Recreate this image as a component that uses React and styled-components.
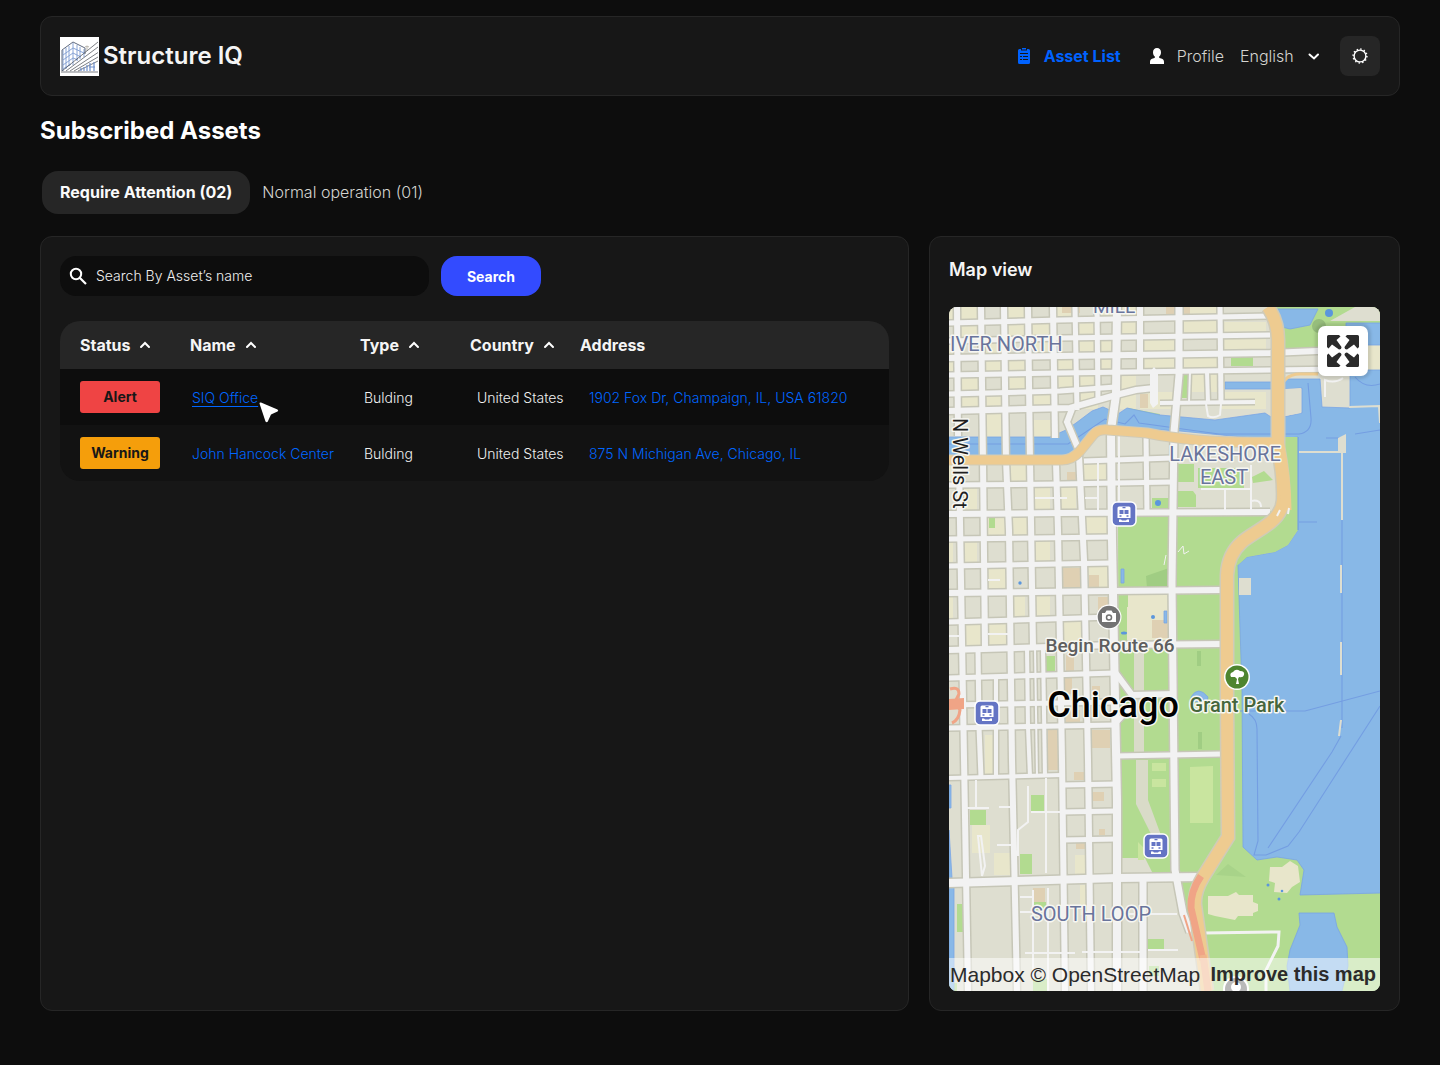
import React from "react";
import styled, { createGlobalStyle } from "styled-components";

const GlobalStyle = createGlobalStyle`
  * { box-sizing: border-box; }
  body {
    margin: 0;
    background: #0d0d0d;
    color: #fafafa;
    font-family: Inter, "Liberation Sans", sans-serif;
    font-size: 16px;
  }
  button, input, select { font-family: inherit; }
  a { text-decoration: none; }
`;

const Page = styled.div`
  min-height: 100vh;
  padding: 16px 40px 54px;
  display: flex;
  flex-direction: column;
`;

const Panel = styled.section`
  background: #171717;
  border: 1px solid #262626;
  border-radius: 12px;
  padding: 19px;
  min-width: 0;
`;

const Header = styled(Panel).attrs({ as: "header" })`
  display: flex;
  align-items: center;
  justify-content: space-between;
`;

const Brand = styled.a`
  display: flex;
  align-items: center;
  gap: 4px;
  color: #f5f5f5;
  font-size: 24px;
  font-weight: 600;
  line-height: 40px;
  white-space: nowrap;
`;

const Nav = styled.nav`
  display: flex;
  align-items: center;
  gap: 16px;
`;

const NavLink = styled.a`
  display: flex;
  align-items: center;
  gap: 8px;
  margin-right: ${(p) => (p.$active ? 8 : 0)}px;
  color: ${(p) => (p.$active ? "#0062ff" : "#d4d4d0")};
  font-weight: ${(p) => (p.$active ? 700 : 300)};
  line-height: 24px;
`;

const Language = styled.label`
  display: flex;
  align-items: center;
  gap: 12px;
  margin-right: 4px;
`;

const LanguageSelect = styled.select`
  appearance: none;
  border: 0;
  padding: 0;
  background: transparent;
  color: #d4d4d0;
  font-size: 16px;
  font-weight: 300;
  line-height: 24px;
`;

const IconButton = styled.button`
  display: grid;
  place-items: center;
  width: 40px;
  height: 40px;
  padding: 0;
  border: 0;
  border-radius: 8px;
  background: #262626;
`;

const Heading = styled.h1`
  margin: 20px 0 25px;
  font-size: 24px;
  font-weight: 700;
  line-height: 30px;
  color: #fff;
`;

const Tabs = styled.div`
  display: flex;
  padding-left: 2px;
  margin-bottom: 22px;
`;

const Tab = styled.button`
  border: 0;
  border-radius: 16px;
  padding: 0 ${(p) => (p.$active ? 18 : 12)}px 2px;
  height: 43px;
  background: ${(p) => (p.$active ? "#262626" : "transparent")};
  color: ${(p) => (p.$active ? "#fafafa" : "#d4d4d0")};
  font-size: 16px;
  font-weight: ${(p) => (p.$active ? 700 : 300)};
`;

const Columns = styled.main`
  display: grid;
  grid-template-columns: minmax(0, 1fr) 471px;
  gap: 20px;
`;

const SearchForm = styled.form`
  display: flex;
  gap: 12px;
  margin-bottom: 25px;
`;

const SearchField = styled.label`
  display: flex;
  align-items: center;
  gap: 6px;
  flex: 0 1 369px;
  height: 40px;
  padding: 0 12px 0 6px;
  border-radius: 16px;
  background: #0d0d0d;
`;

const SearchInput = styled.input`
  flex: 1;
  min-width: 0;
  border: 0;
  padding: 0 0 2px;
  outline: 0;
  background: transparent;
  color: #f0f0f0;
  font-size: 14px;
  font-weight: 300;
  &::placeholder { color: #f0f0f0; opacity: 1; }
`;

const SearchButton = styled.button`
  width: 100px;
  height: 40px;
  border: 0;
  border-radius: 16px;
  background: #334bff;
  color: #fff;
  font-size: 14px;
  font-weight: 700;
`;

const Table = styled.table`
  width: 100%;
  table-layout: fixed;
  border-spacing: 0;
  border-radius: 20px;
  overflow: hidden;
`;

const Col = styled.col`
  width: ${(p) => p.$width};
`;

const HeadCell = styled.th`
  height: 48px;
  padding: 0 0 0 ${(p) => p.$inset}px;
  background: #262626;
  color: #f5f5f5;
  text-align: left;
  font-size: 16px;
  font-weight: 700;
`;

const SortButton = styled.button`
  display: flex;
  align-items: center;
  gap: 8px;
  border: 0;
  padding: 0;
  background: transparent;
  color: inherit;
  font-size: 16px;
  font-weight: 700;
`;

const Row = styled.tr`
  background: ${(p) => (p.$hovered ? "#0d0d0d" : "#121212")};
`;

const Cell = styled.td`
  height: 56px;
  padding: 0 0 0 ${(p) => p.$inset}px;
  color: #f0f0f0;
  font-size: 14px;
  font-weight: 300;
  white-space: nowrap;
`;

const Badge = styled.span`
  display: block;
  width: 80px;
  border-radius: 3px;
  background: ${(p) => (p.$level === "Alert" ? "#ef4444" : "#f59e0b")};
  color: #171717;
  font-weight: 700;
  line-height: 32px;
  text-align: center;
`;

const TextLink = styled.a`
  position: relative;
  color: #0066ff;
  text-decoration: ${(p) => (p.$underlined ? "underline" : "none")};
  text-underline-offset: 3px;
`;

const Pointer = styled.svg`
  position: absolute;
  left: 100%;
  top: 12px;
  z-index: 1;
`;

const PanelTitle = styled.h2`
  margin: 0 0 24px;
  font-size: 18px;
  font-weight: 600;
  line-height: 27px;
  color: #f5f5f5;
`;

const MapFrame = styled.div`
  position: relative;
  border-radius: 8px;
  overflow: hidden;
  aspect-ratio: 431 / 684;
`;

const MapDrawing = styled.svg`
  display: block;
  width: 100%;
  height: 100%;
`;

const ExpandButton = styled.button`
  position: absolute;
  top: 19px;
  right: 12px;
  display: grid;
  place-items: center;
  width: 50px;
  height: 50px;
  padding: 0;
  border: 0;
  border-radius: 7px;
  background: #fff;
  box-shadow: 0 0 3px 3px rgba(0, 0, 0, 0.12);
`;

const Attribution = styled.div`
  position: absolute;
  left: 0;
  right: 0;
  bottom: 0;
  display: flex;
  justify-content: space-between;
  padding: 0 4px 0 1px;
  background: rgba(255, 255, 255, 0.5);
  font-family: "Liberation Sans", Arial, sans-serif;
  font-size: 21px;
  line-height: 33px;
  white-space: nowrap;
`;

const AttributionLink = styled.a`
  color: #2b2b2b;
  font-size: ${(p) => (p.$strong ? 20 : 21)}px;
  font-weight: ${(p) => (p.$strong ? 700 : 400)};
`;

const Logo = () => (
  <svg width="39" height="39" viewBox="0 0 39 39" aria-hidden="true">
    <path fill="#fff" d="M0 0h39v39H0z" />
    <g fill="none" stroke="#88a4d6" strokeWidth="1">
      <path d="M3 13v21M6 11v21M9 9v20M13 6v22M17 8v16M20 10v12M24 12v8" />
      <path d="M3 18 13 11l11 5M3 23l10-7 8 4M3 28l10-7 5 2M3 32l8-5" />
    </g>
    <path fill="none" stroke="#5f6a80" strokeWidth="1" d="M2 13 13 5l12 6v6M2 13v21" />
    <path fill="none" stroke="#b8b4ac" strokeWidth="1" d="M25 10l2-1 2 1M27 9v5" />
    <path fill="none" stroke="#42464e" strokeWidth=".7" d="M2 34 38 5M6 34 38 10M10 34l28-18.500M14 34l24-14M18 34l20-10M1 35h37" />
    <path fill="none" stroke="#6f8fcb" strokeWidth="1.200" d="M21 34v-3M24 34v-4M27 34v-6M30 34v-8M34 34v-9M29 30h6" />
  </svg>
);

const ClipboardIcon = () => (
  <svg width="24" height="24" viewBox="0 0 24 24" aria-hidden="true">
    <path fill="#0062ff" d="M6 6.500A1.500 1.500 0 0 1 7.500 5H9v1.500h6V5h1.500A1.500 1.500 0 0 1 18 6.500v12a1.500 1.500 0 0 1-1.500 1.500h-9A1.500 1.500 0 0 1 6 18.500zM10 4h4v1.500h-4z" />
    <path fill="none" stroke="#171717" strokeWidth="1.200" d="M8 9.500h8M8 12.500h2M11 12.500h5M8 15.500h2M11 15.500h5" />
  </svg>
);

const PersonIcon = () => (
  <svg width="24" height="24" viewBox="0 0 24 24" aria-hidden="true">
    <path fill="#fff" d="M12 4c2.500 0 4 1.800 4 4.200 0 2-.8 3.600-2 4.500 0 1 .8 1.400 2.200 1.900 2 .7 2.800 1.400 2.800 3.400v2H5v-2c0-2 .8-2.700 2.800-3.400 1.400-.5 2.200-.9 2.200-1.900-1.200-.9-2-2.500-2-4.500C8 5.800 9.500 4 12 4z" />
  </svg>
);

const Chevron = ({ down }) => (
  <svg width="14" height="14" viewBox="0 0 14 14" aria-hidden="true">
    <path
      fill="none"
      stroke="#fff"
      strokeWidth="2"
      strokeLinecap="round"
      d={down ? "M3.500 5.500 8 9.500 12 5.500" : "M3 9l4-4 4 4"}
    />
  </svg>
);

const SunIcon = () => (
  <svg width="18" height="18" viewBox="0 0 18 18" aria-hidden="true">
    <circle cx="9" cy="9" r="5.900" fill="none" stroke="#fff" strokeWidth="1.400" />
    <circle cx="9" cy="9" r="6.900" fill="none" stroke="#fff" strokeWidth="1.500" strokeDasharray="1.400 2.213" />
  </svg>
);

const SearchIcon = () => (
  <svg width="24" height="24" viewBox="0 0 24 24" aria-hidden="true">
    <circle cx="10" cy="10" r="5.200" fill="none" stroke="#fff" strokeWidth="2" />
    <path stroke="#fff" strokeWidth="2.200" d="m14 14 6 6" />
  </svg>
);

const ExpandIcon = () => (
  <svg width="34" height="34" viewBox="0 0 34 34" aria-hidden="true">
    {[0, 90, 180, 270].map((angle) => (
      <path
        key={angle}
        fill="#2b2b2b"
        transform={`rotate(${angle} 17 17)`}
        d="M1 2.500Q1 1 2.500 1H13L14.500 2.500 10.500 6 15.500 13Q15.500 15.500 13 15.500L6 10.500 2.500 14.500 1 13z"
      />
    ))}
  </svg>
);

/* Streets: [points, width] in map units */
const avenues = [
  [[[957, 307], [958, 436]], 6], [[[959, 464], [963, 700], [968, 991]], 6],
  [[[981, 307], [983, 460], [985, 648]], 6],
  [[[1004, 307], [1006, 460], [1009, 530], [1012, 760], [1017, 991]], 6],
  [[[1028, 307], [1030, 460], [1033, 648]], 6],
  [[[1053, 307], [1055, 438]], 6], [[[1056, 462], [1058, 530], [1062, 760], [1065, 991]], 6],
  [[[1075, 307], [1077, 410]], 5], [[[1079, 455], [1084, 560], [1088, 760], [1091, 991]], 6],
  [[[1097, 307], [1098, 399]], 5],
  [[[1117, 307], [1116, 395], [1111, 430], [1112, 540], [1115, 700], [1117, 800], [1117, 991]], 8],
  [[[1140, 307], [1140, 372]], 6], [[[1146, 435], [1147, 512]], 5],
  [[[1179, 307], [1179, 375], [1174, 432], [1172, 583], [1175, 870], [1183, 913], [1190, 932]], 7],
  [[[1220, 307], [1221, 402]], 5],
  [[[1143, 880], [1143, 991]], 7],
  [[[978, 648], [979, 727], [981, 777]], 5],
  [[[996, 677], [996, 777]], 4],
  [[[1027, 648], [1028, 727], [1030, 777]], 4],
  [[[1035, 648], [1037, 777]], 2], [[[1043, 648], [1045, 777]], 4],
  [[[1190, 372], [1189, 402]], 2], [[[1207, 372], [1208, 402]], 4],
];

const streets = [
  [[[949, 323], [1060, 320], [1270, 316]], 5],
  [[[949, 341], [1060, 338], [1270, 335]], 5],
  [[[949, 358], [1060, 356], [1270, 353], [1340, 350]], 6],
  [[[949, 375], [1060, 373], [1270, 370], [1345, 369]], 5],
  [[[949, 394], [1060, 391], [1116, 387]], 5],
  [[[949, 411], [1070, 408], [1116, 395], [1136, 390], [1154, 388]], 6],
  [[[1072, 409], [1067, 422], [1080, 453]], 6],
  [[[1160, 403], [1255, 402]], 4],
  [[[1084, 461], [1172, 458]], 5],
  [[[949, 485], [1060, 484], [1172, 482]], 5],
  [[[949, 514], [1060, 513], [1270, 512]], 6],
  [[[949, 539], [1112, 537]], 5],
  [[[949, 566], [1112, 563]], 5],
  [[[949, 593], [1112, 591], [1220, 590]], 6],
  [[[949, 622], [1112, 617]], 5],
  [[[949, 650], [1112, 645], [1222, 644]], 6],
  [[[949, 678], [1115, 673]], 5],
  [[[949, 705], [1115, 702]], 5],
  [[[1115, 672], [1132, 695], [1175, 694]], 6], [[[1132, 706], [1115, 724]], 5],
  [[[949, 728], [1115, 725]], 5],
  [[[1115, 756], [1222, 754]], 5],
  [[[949, 778], [1062, 775]], 4],
  [[[1062, 785], [1117, 784]], 5], [[[1062, 812], [1117, 811]], 5], [[[1062, 840], [1117, 839]], 5],
  [[[949, 883], [1117, 878], [1200, 877]], 8],
];

const toPath = (points) => "M" + points.map((p) => p.join(" ")).join("L");

const lots = [];
const lotColumns = [949, 958, 982, 1006, 1030, 1055, 1077, 1098, 1116, 1140, 1179, 1220, 1270];
const lotRows = [307, 322, 339, 357, 374, 392, 409];
lotRows.slice(0, -1).forEach((y, r) =>
  lotColumns.slice(0, -1).forEach((x, c) => {
    if ((r * 5 + c * 3) % 7 < 4) lots.push([x, y, lotColumns[c + 1] - x - (c % 3) * 2, lotRows[r + 1] - y]);
  })
);
const southColumns = [949, 961, 985, 1009, 1033, 1058, 1084, 1113];
const southRows = [462, 484, 513, 538, 564, 592, 620, 648];
southRows.slice(0, -1).forEach((y, r) =>
  southColumns.slice(0, -1).forEach((x, c) => {
    if ((r * 3 + c * 5) % 7 < 3) lots.push([x, y, southColumns[c + 1] - x - (r % 2) * 8, southRows[r + 1] - y]);
  })
);
lots.push([985, 412, 20, 26], [1033, 420, 18, 20], [985, 735, 8, 40], [972, 825, 18, 28], [994, 853, 18, 22], [1075, 855, 10, 22], [1080, 885, 6, 30]);

const brownLots = [
  [1062, 568, 18, 20], [1089, 575, 10, 12], [1098, 597, 12, 16], [1066, 655, 8, 18], [1062, 672, 10, 22],
  [1092, 686, 8, 16], [1066, 710, 14, 18], [1090, 730, 20, 18], [1048, 730, 10, 40], [1074, 772, 10, 8],
  [1092, 792, 12, 9], [1099, 829, 6, 6], [1076, 843, 9, 6], [1033, 888, 12, 14], [1067, 472, 12, 9],
  [1140, 394, 8, 14], [1062, 307, 18, 6], [1166, 307, 24, 8],
];

const greenLots = [
  [1231, 356, 22, 10], [1182, 374, 7, 24],
  [970, 810, 16, 15], [1031, 795, 13, 16], [1020, 854, 12, 20], [957, 904, 7, 28], [1033, 902, 13, 8],
  [1046, 656, 9, 16], [1033, 979, 16, 12], [989, 516, 6, 12], [1152, 498, 18, 10], [949, 983, 8, 8],
];

const Lots = ({ items, fill }) =>
  items.map(([x, y, w, h], i) => <rect key={i} x={x} y={y} width={w} height={h} fill={fill} />);

const lakeshore =
  "M1268 307Q1278 322 1278 340V447Q1284 480 1283 500C1282 522 1256 530 1242 542Q1228 554 1227 575V700L1228 837L1203 877Q1194 892 1195 905L1207 991";
const waterfront = "M949 460H1062Q1072 460 1080 451L1093 435Q1098 429 1108 430L1147 433Q1200 444 1278 442";

const Transit = ({ x, y }) => (
  <g transform={`translate(${x} ${y})`}>
    <rect x="-12" y="-12" width="24" height="24" rx="5" fill="#6474c4" stroke="#fff" strokeWidth="1.500" />
    <path fill="#fff" d="M-6.500-6q0-1.500 1.500-1.500H5q1.500 0 1.500 1.500V4h-13zM-5 5.500h2l1 1h4l1-1h2v2.500H-5z" />
    <path fill="#6474c4" d="M-4.500-4h4v4h-4zM.5-4h4v4h-4zM-4.500 1.300h2v1.400h-2zM2.500 1.300h2v1.400h-2zM-1.500-7h3v1.200h-3z" />
  </g>
);

const Label = styled.text`
  font-family: Roboto, "Liberation Sans", sans-serif;
  font-size: ${(p) => p.$size}px;
  font-weight: ${(p) => p.$weight || 400};
  fill: ${(p) => p.$color};
  stroke: #f7f7f2;
  stroke-width: 3px;
  stroke-linejoin: round;
  paint-order: stroke;
`;

const CityMap = () => (
  <MapDrawing viewBox="949 307 431 684" preserveAspectRatio="xMidYMid slice" role="img" aria-label="Map of Chicago">
    <path fill="#deded0" d="M949 307h431v684H949z" />
    <Lots items={lots} fill="#e8e6cb" />
    <Lots items={brownLots} fill="#dfd0b3" />
    <Lots items={greenLots} fill="#b2db90" />

    <g fill="#b2db90">
      <path d="M1118 516H1262L1298 437V530L1247 557V850L1310 850L1380 890V991H1208L1190 935L1178 884V874H1153L1145 858H1119z" />
      <path d="M1275 307H1380V355H1283zM1085 445 1064 455 1075 436 1100 420zM1090 440l-20 15h-12l16-8z" />
      <path d="M1128 408l32 6v7h-40z" />
    </g>
    <path fill="#deded0" d="M1177 446h100l6 54q-2 10-14 12h-92z" />
    <path fill="#b2db90" d="M1177 464h17v18h-17zM1177 491h16l3 4v12h-19zM1198 468h46v20h-46zM1252 477l12-6 9 9-20 3z" />
    <path fill="#deded0" d="M1282 352h34v16h-34zM1355 307h25v14h-50zM1285 370h37v10h-37z" />
    <path fill="#e8e6cb" d="M1366 345h14v26h-14zM1127 594h41v47h-41z" />
    <path fill="#a0cd83" d="M1146 576l23-8v20h-22zM1197 651h4v15h-4zM1198 732h4v17h-4z" />
    <path fill="#a8d389" d="M1216 875l12-11 18 13z" />
    <path fill="#d9dbc8" d="M1134 650h10v105h-10zM1136 760h12v40l14 38-8 2-18-36z" />
    <path fill="#deded0" d="M1119 884h59l15 50 14 57h-88z" />
    <path fill="#b2db90" d="M1148 939h16v10h-16zM1149 966h10v10h-10zM1121 592h7v15h-7z" />
    <path fill="#dfd0b3" d="M1152 620h16v18h-16z" />
    <path fill="#c9e59f" d="M1190 767l23-1v57h-23zM1152 763h14v8h-14zM1152 779h14v8h-14zM1138 842l6 6v12h-6z" />

    <g fill="#88b8e7" stroke="#7aa4e4" strokeWidth=".8">
      <path d="M949 437H1050L1066 430 1076 423 1092 411 1103 407 1112 411 1118 414 1127 408 1160 415 1215 420 1265 413 1274 419 1302 413V388L1285 389V379H1320L1322 407 1350 408V370H1381V893L1300 895 1304 870 1297 860 1277 857 1257 860 1243 847 1242 690 1239 597 1238 565 1247 557 1275 552 1288 545 1298 530V437L1273 440 1180 431 1130 428 1095 430 1080 447 1060 460H949z" />
      <path d="M1272 309h46l-8 16-20 4-8-2zM1346 323h35v22h-35zM1225 382h48v7h-48z" />
      <path d="M1299 913H1334L1337 927 1347 947 1348 966 1342 991H1290L1287 966 1290 950 1300 925z" />
      <path d="M949 785l2 0 0 23h-2zM949 830l3 48h-3zM949 887h5v104h-5z" />
      <path d="M1191 697q7-12 17 0l-1 4-15 1zM1121 569h3v14h-3zM1164 611h3v12h-3z" />
    </g>
    <path fill="#b2db90" d="M1284 437h14v93l-10 15-13 7-28 5-9 8-8-3 48-46 5-20z" />
    <g fill="none" stroke="#749ee2" strokeWidth="1.100">
      <path d="M949 444H1068L1105 419l20 5 9-9 5 8 80 11h80q13-2 12-16l-3-35M1298 437v93" />
      <path d="M1249 714q8 5 8 15l1 112-4 14h12l22-9 11-14L1380 706M1268 848 1332 752 1341 736M1240 711h65l75-20M1342 453v275M1355 434l25-4M1326 438h14M1299 522h18M1355 377q10 12 25 7" />
    </g>
    <path fill="#deded0" d="M1239 578h12v17h-12zM1338 438l8-4v18h-8zM1285 389l16-1v25l-16 3z" />
    <path fill="none" stroke="#deded0" strokeWidth="2" d="M1299 452h47M1342 452v68M1349 407l30-1 1 17M1341 565v28M1341 642v33M1341 720l-2 16" />
    <path fill="#e8e6cb" d="M1208 896h20l8-4 3 3h14v7l5 2v7l-5 2v3h-15l-3 4-20-4-7-2zM1270 867h12l8-6 8 5 2 16-8 5-5 6-13-1 1-9-6-2z" />
    <g fill="#5b96dc">
      <circle cx="1020" cy="583" r="1.700" /><circle cx="1153" cy="617" r="2" /><circle cx="1268" cy="885" r="1.500" />
      <circle cx="1279" cy="899" r="1.500" /><circle cx="1282" cy="891" r="1.300" /><ellipse cx="1124" cy="633" rx="3" ry="1.500" />
      <circle cx="1158" cy="503" r="3" /><circle cx="1329" cy="313" r="4" />
    </g>
    <circle cx="1319" cy="326" r="7" fill="#96bd7c" />

    {[avenues, streets].map((group, g) =>
      group.map(([points, width], i) => (
        <path key={`${g}-${i}`} d={toPath(points)} fill="none" stroke="#c6c6b7" strokeWidth={width + 3} />
      ))
    )}
    {[avenues, streets].map((group, g) =>
      group.map(([points, width], i) => (
        <path key={`${g}-${i}`} d={toPath(points)} fill="none" stroke="#f2f2f2" strokeWidth={width} />
      ))
    )}
    <g fill="none" stroke="#f2f2f2" strokeWidth="2">
      <path d="M976 780v28M967 808h22M999 807h12M1028 786v36l-10 8v26M1046 778v95M1031 812h31M997 845h18M982 876l-4-40 3 0 4 30-3 10M1033 890v90M1048 888v103M1020 897h12M1020 912h12M1025 953h50M1082 952h61M1098 462v50M1119 435v74M1035 498h32M1085 498h14M1225 490v22M1251 465v46M1201 489h49M1251 501q10-2 10 6M949 636h12M988 634h20M988 580h12M1206 404l2 12q6 3 12-1l1-11M1325 397v-17q10 4 18-2M1117 914h60M1148 950h30" />
      <path strokeWidth="3" d="M1204 933l75-1-1 14-12 24v21" />
      <path strokeWidth="1" d="M1178 552l5-6 1 8 5-3M1164 565l2-10" />
    </g>
    <path fill="#f2f2f2" d="M1150 372l4-5 4 5v32l-5 4-3-5z" />

    <g fill="none">
      <path d="M1278 395Q1282 374 1300 374H1318" stroke="#eecb90" strokeWidth="3" />
      <path d={waterfront} stroke="#d0cbb8" strokeWidth="11" />
      <path d={lakeshore} stroke="#d0cbb8" strokeWidth="15" />
      <path d={waterfront} stroke="#eecb90" strokeWidth="9" />
      <path d={lakeshore} stroke="#eecb90" strokeWidth="12" />
      <path d="M1278 440Q1286 480 1286 510" stroke="#eecb90" strokeWidth="11" />
      <path d="M1201 876Q1190 892 1191 908L1203 960" stroke="#f0a486" strokeWidth="7" />
      <path d="M1203 955L1208 991" stroke="#f0b48c" strokeWidth="7" />
      <path d="M1184 915l8 26" stroke="#f0a486" strokeWidth="2" />
      <path d="M1277 516l3-6M1288 514l1-6" stroke="#f2f2f2" strokeWidth="2" />
    </g>
    <path fill="none" stroke="#f0a486" strokeWidth="3" d="M950 689q9-3 9 5l-4 8 5 8q-1 10-8 13" />
    <path fill="#f0a486" d="M949 699l15-1v11l-15 1z" />

    <Transit x={1124} y={514} />
    <Transit x={987} y={713} />
    <Transit x={1156} y={846} />
    <g transform="translate(1109 617)">
      <circle r="12.500" fill="#fff" /><circle r="11.300" fill="#737373" />
      <path fill="#fff" d="M-7-4h3l1.500-2.500h5L4-4h3v9H-7z" />
      <circle cy=".5" r="2.500" fill="#fff" stroke="#737373" strokeWidth="1.500" />
    </g>
    <g transform="translate(1237 677)">
      <circle r="13" fill="#fff" /><circle r="11.500" fill="#4e852f" />
      <path fill="#fff" d="M-6 0q-2-4 2-5 3-4 7-1 5 0 4 4-1 3-5 2l-1 2 1 5h-3l1-5-2-2z" />
    </g>
    <circle cx="1236" cy="989" r="12" fill="#737373" stroke="#fff" strokeWidth="2" />
    <circle cx="1236" cy="987" r="5" fill="#fff" />

    <Label x="1093" y="313" $size="19" $color="#69749c">MILL</Label>
    <Label x="950" y="351" $size="20" $color="#69749c">IVER NORTH</Label>
    <Label x="1225" y="461" textAnchor="middle" $size="20" $color="#69749c">LAKESHORE</Label>
    <Label x="1224" y="484" textAnchor="middle" $size="20" $color="#69749c">EAST</Label>
    <Label x="1091" y="921" textAnchor="middle" $size="20" $color="#69749c">SOUTH LOOP</Label>
    <Label x="1110" y="652" textAnchor="middle" $size="19" $weight="500" $color="#5e5e5e">Begin Route 66</Label>
    <Label x="1237" y="712" textAnchor="middle" $size="20" $weight="500" $color="#46663c">Grant Park</Label>
    <Label x="1113" y="717" textAnchor="middle" $size="36" $weight="500" $color="#000">Chicago</Label>
    <Label transform="translate(953 418) rotate(90)" $size="20" $color="#1f1f1f">N Wells St</Label>
  </MapDrawing>
);

const columns = [
  { label: "Status", width: "120px", head: 20, body: 20, sortable: true },
  { label: "Name", width: "170px", head: 10, body: 12, sortable: true },
  { label: "Type", width: "110px", head: 10, body: 14, sortable: true },
  { label: "Country", width: "110px", head: 10, body: 17, sortable: true },
  { label: "Address", width: "auto", head: 10, body: 19, sortable: false },
];

const assets = [
  { status: "Alert", name: "SIQ Office", type: "Bulding", country: "United States", address: "1902 Fox Dr, Champaign, IL, USA 61820", hovered: true },
  { status: "Warning", name: "John Hancock Center", type: "Bulding", country: "United States", address: "875 N Michigan Ave, Chicago, IL", hovered: false },
];

const AssetRow = ({ asset }) => (
  <Row $hovered={asset.hovered}>
    <Cell $inset={columns[0].body}><Badge $level={asset.status}>{asset.status}</Badge></Cell>
    <Cell $inset={columns[1].body}>
      <TextLink href="#" $underlined={asset.hovered}>
        {asset.name}
        {asset.hovered && (
          <Pointer width="22" height="24" viewBox="0 0 22 24" aria-hidden="true">
            <path fill="#fff" d="M1.500 2.500Q1.500 1 3 1.500L19.500 8.500Q21 9.800 19.500 10.500L13 13.500 9.800 20.500Q8.800 22 7.500 20.500z" />
          </Pointer>
        )}
      </TextLink>
    </Cell>
    <Cell $inset={columns[2].body}>{asset.type}</Cell>
    <Cell $inset={columns[3].body}>{asset.country}</Cell>
    <Cell $inset={columns[4].body}><TextLink href="#">{asset.address}</TextLink></Cell>
  </Row>
);

export default function App() {
  return (
    <>
      <GlobalStyle />
      <Page>
        <Header>
          <Brand href="#"><Logo />Structure IQ</Brand>
          <Nav>
            <NavLink href="#" $active><ClipboardIcon />Asset List</NavLink>
            <NavLink href="#"><PersonIcon />Profile</NavLink>
            <Language>
              <LanguageSelect aria-label="Language"><option>English</option></LanguageSelect>
              <Chevron down />
            </Language>
            <IconButton type="button" aria-label="Toggle theme"><SunIcon /></IconButton>
          </Nav>
        </Header>

        <Heading>Subscribed Assets</Heading>
        <Tabs role="tablist">
          <Tab type="button" role="tab" aria-selected="true" $active>Require Attention (02)</Tab>
          <Tab type="button" role="tab" aria-selected="false">Normal operation (01)</Tab>
        </Tabs>

        <Columns>
          <Panel>
            <SearchForm onSubmit={(e) => e.preventDefault()}>
              <SearchField>
                <SearchIcon />
                <SearchInput type="text" aria-label="Search assets" placeholder="Search By Asset’s name" />
              </SearchField>
              <SearchButton type="submit">Search</SearchButton>
            </SearchForm>
            <Table>
              <colgroup>{columns.map((c) => <Col key={c.label} $width={c.width} />)}</colgroup>
              <thead>
                <tr>
                  {columns.map((c) => (
                    <HeadCell key={c.label} scope="col" $inset={c.head}>
                      {c.sortable ? <SortButton type="button">{c.label}<Chevron /></SortButton> : c.label}
                    </HeadCell>
                  ))}
                </tr>
              </thead>
              <tbody>{assets.map((a) => <AssetRow key={a.name} asset={a} />)}</tbody>
            </Table>
          </Panel>

          <Panel>
            <PanelTitle>Map view</PanelTitle>
            <MapFrame>
              <CityMap />
              <ExpandButton type="button" aria-label="Expand map"><ExpandIcon /></ExpandButton>
              <Attribution>
                <AttributionLink href="#">Mapbox © OpenStreetMap</AttributionLink>
                <AttributionLink href="#" $strong>Improve this map</AttributionLink>
              </Attribution>
            </MapFrame>
          </Panel>
        </Columns>
      </Page>
    </>
  );
}
